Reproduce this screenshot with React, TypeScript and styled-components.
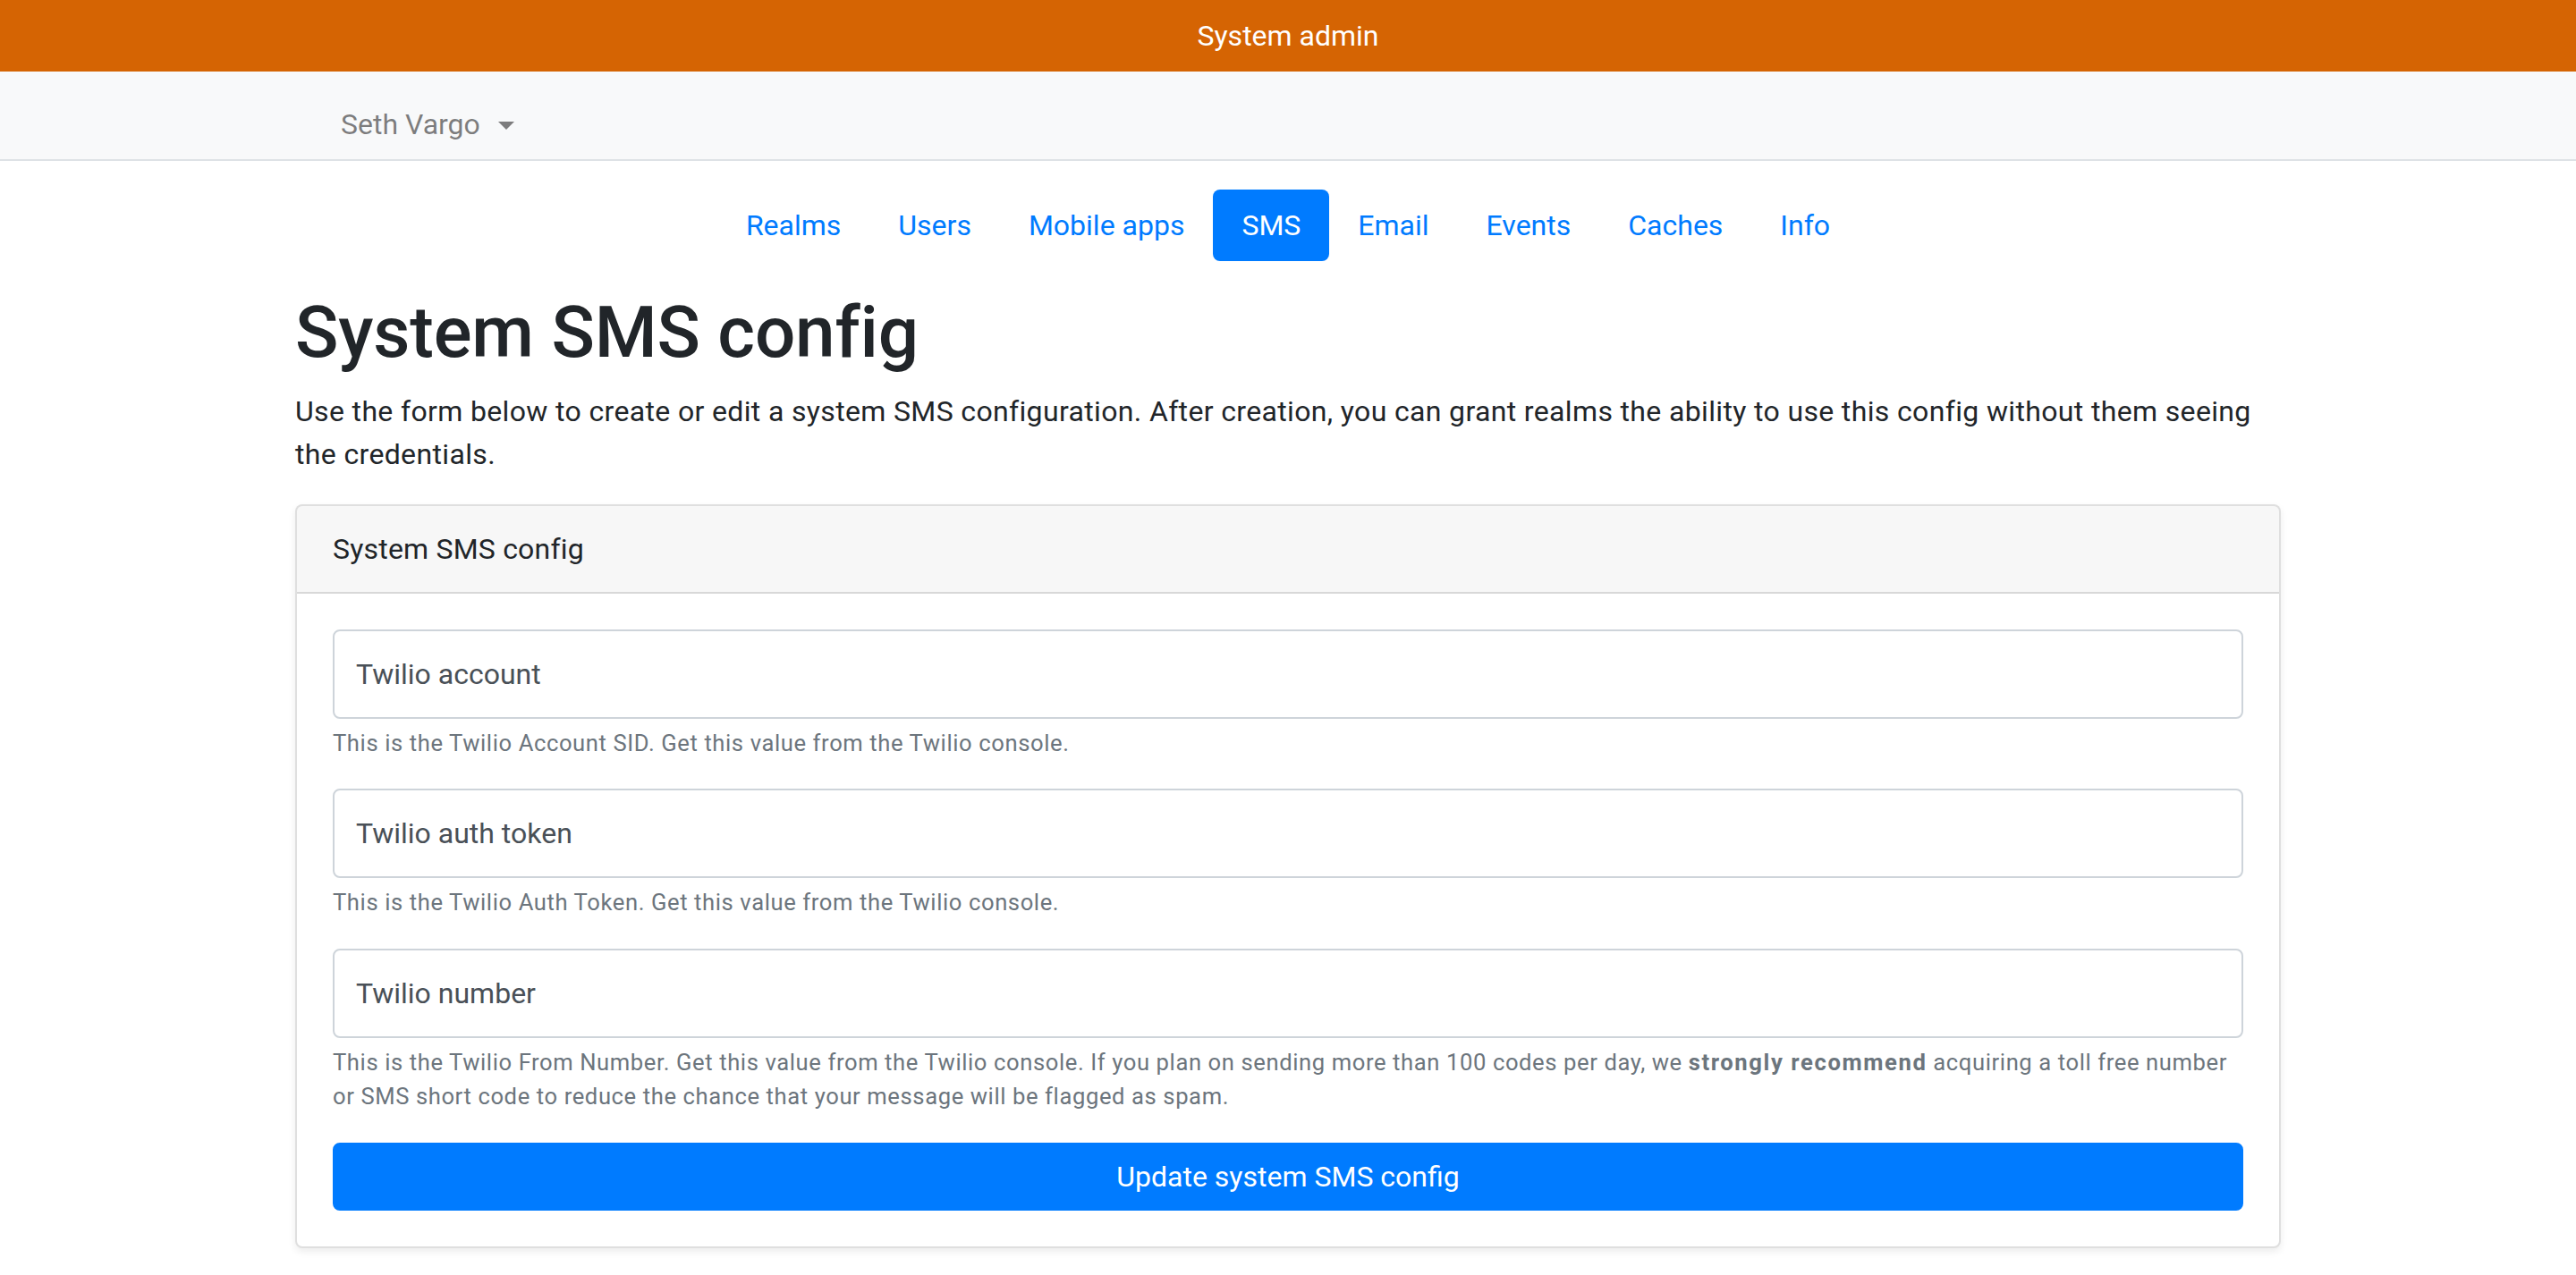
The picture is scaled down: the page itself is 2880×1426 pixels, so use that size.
import React from "react";
import styled, { createGlobalStyle } from "styled-components";

const Global = createGlobalStyle`
  html, body { margin: 0; padding: 0; background: #fff; }
  body {
    font-family: Roboto, "Noto Sans", "Liberation Sans", sans-serif;
    color: #212529;
    font-size: 32px;
    line-height: 1.5;
  }
  * { box-sizing: border-box; }
`;

const TopBar = styled.div`
  background: #d56403;
  color: #fff;
  height: 80px;
  display: flex;
  align-items: center;
  justify-content: center;
  font-size: 32px;
  line-height: 48px;
`;

const NavBar = styled.nav`
  background: #f8f9fa;
  border-bottom: 2px solid #dee2e6;
  height: 100px;
`;

const Container = styled.div`
  max-width: 2280px;
  margin: 0 auto;
  padding: 0 30px;
`;

const NavInner = styled(Container)`
  display: flex;
  align-items: center;
  height: 100%;
  padding-top: 20px;
`;

const UserMenu = styled.button`
  all: unset;
  margin-left: 51px;
  display: inline-flex;
  align-items: center;
  font-family: inherit;
  font-size: 32px;
  line-height: 48px;
  color: rgba(0, 0, 0, 0.5);
  cursor: pointer;
`;

const Caret = styled.span`
  display: inline-block;
  margin-left: 20px;
  margin-top: 2px;
  width: 0;
  height: 0;
  border-top: 9.6px solid currentColor;
  border-left: 9.6px solid transparent;
  border-right: 9.6px solid transparent;
`;

const Tabs = styled.ul`
  list-style: none;
  margin: 32px 0 0;
  padding: 0;
  display: flex;
  justify-content: center;
`;

const TabLink = styled.a<{ $active?: boolean }>`
  display: block;
  padding: 16px 32px;
  font-size: 32px;
  line-height: 48px;
  border-radius: 8px;
  text-decoration: none;
  color: ${(p) => (p.$active ? "#fff" : "#007bff")};
  background: ${(p) => (p.$active ? "#007bff" : "transparent")};
`;

const Title = styled.h1`
  margin: 32px 0 16px;
  font-size: 80px;
  font-weight: 500;
  line-height: 1.2;
  letter-spacing: -0.2px;
  color: #212529;
`;

const Lead = styled.p`
  margin: 0 0 32px;
  font-size: 32px;
  line-height: 48px;
  letter-spacing: 0.35px;
`;

const Card = styled.div`
  border: 2px solid rgba(0, 0, 0, 0.125);
  border-radius: 8px;
  box-shadow: 0 4px 8px rgba(0, 0, 0, 0.075);
  background: #fff;
  margin-bottom: 64px;
  overflow: hidden;
`;

const CardHeader = styled.div`
  background: rgba(0, 0, 0, 0.03);
  border-bottom: 2px solid rgba(0, 0, 0, 0.125);
  padding: 24px 40px;
  font-size: 32px;
  line-height: 48px;
  letter-spacing: 0.2px;
`;

const CardBody = styled.form`
  padding: 40px;
  display: flex;
  flex-direction: column;
`;

const Group = styled.div`
  margin-bottom: 32px;
`;

const Input = styled.input`
  display: block;
  width: 100%;
  height: 100px;
  padding: 24px;
  border: 2px solid #ced4da;
  border-radius: 8px;
  font-family: inherit;
  font-size: 32px;
  line-height: 48px;
  color: #495057;
  background: #fff;
  outline: none;
  &::placeholder { color: #495057; opacity: 1; }
`;

const Help = styled.small`
  display: block;
  margin-top: 8px;
  font-size: 25.6px;
  line-height: 38.4px;
  letter-spacing: 0.6px;
  color: #6c757d;
  strong { font-weight: 700; letter-spacing: 1.6px; }
`;

const Submit = styled.button`
  display: block;
  width: 100%;
  height: 76px;
  border: 2px solid #007bff;
  border-radius: 8px;
  background: #007bff;
  color: #fff;
  font-family: inherit;
  font-size: 32px;
  line-height: 48px;
  padding: 12px 24px;
  cursor: pointer;
`;

const tabs = ["Realms", "Users", "Mobile apps", "SMS", "Email", "Events", "Caches", "Info"];

const fields = [
  { placeholder: "Twilio account", help: <>This is the Twilio Account SID. Get this value from the Twilio console.</> },
  { placeholder: "Twilio auth token", help: <>This is the Twilio Auth Token. Get this value from the Twilio console.</> },
  {
    placeholder: "Twilio number",
    help: (
      <>
        This is the Twilio From Number. Get this value from the Twilio console. If you plan on sending more than 100 codes per day, we{" "}
        <strong>strongly recommend</strong> acquiring a toll free number or SMS short code to reduce the chance that your message will be flagged as spam.
      </>
    ),
  },
];

export default function App() {
  return (
    <>
      <Global />
      <TopBar>System admin</TopBar>
      <NavBar>
        <NavInner>
          <UserMenu type="button">
            Seth Vargo
            <Caret />
          </UserMenu>
        </NavInner>
      </NavBar>
      <Container>
        <Tabs>
          {tabs.map((t) => (
            <li key={t}>
              <TabLink href="#" $active={t === "SMS"}>
                {t}
              </TabLink>
            </li>
          ))}
        </Tabs>
        <Title>System SMS config</Title>
        <Lead>
          Use the form below to create or edit a system SMS configuration. After creation, you can grant realms the ability to use this config without them seeing the credentials.
        </Lead>
        <Card>
          <CardHeader>System SMS config</CardHeader>
          <CardBody onSubmit={(e) => e.preventDefault()}>
            {fields.map((f) => (
              <Group key={f.placeholder}>
                <Input type="text" placeholder={f.placeholder} />
                <Help>{f.help}</Help>
              </Group>
            ))}
            <Submit type="submit">Update system SMS config</Submit>
          </CardBody>
        </Card>
      </Container>
    </>
  );
}
